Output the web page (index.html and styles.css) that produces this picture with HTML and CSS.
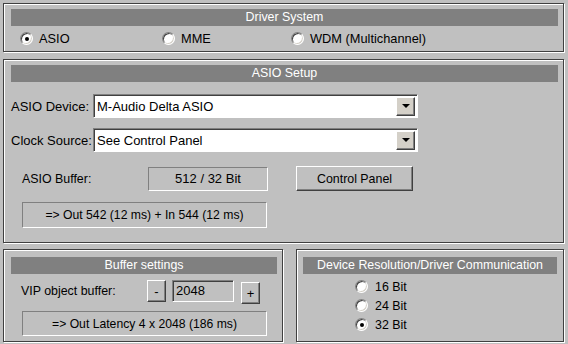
FILE: index.html
```html
<!DOCTYPE html>
<html lang="en">
<head>
  <meta charset="UTF-8">
  <title>Driver Setup</title>
  <link rel="stylesheet" href="styles.css">
</head>
<body>
  <div class="page">
    <section class="panel panel-driver">
      <div class="panel-title">Driver System</div>
      <div class="driver-row">
        <label class="radio"><span class="dot checked"></span>ASIO</label>
        <label class="radio"><span class="dot"></span>MME</label>
        <label class="radio"><span class="dot"></span>WDM (Multichannel)</label>
      </div>
    </section>

    <section class="panel panel-asio">
      <div class="panel-title">ASIO Setup</div>
      <div class="field-row first">
        <span class="field-label">ASIO Device:</span>
        <div class="combo"><span class="combo-text">M-Audio Delta ASIO</span><span class="combo-btn"><i class="arrow"></i></span></div>
      </div>
      <div class="field-row">
        <span class="field-label">Clock Source:</span>
        <div class="combo"><span class="combo-text">See Control Panel</span><span class="combo-btn"><i class="arrow"></i></span></div>
      </div>
      <div class="buffer-row">
        <span class="buffer-label">ASIO Buffer:</span>
        <div class="display buffer-value">512 / 32 Bit</div>
        <button class="btn control-btn">Control Panel</button>
      </div>
      <div class="display wide">=&gt; Out 542 (12 ms) + In 544 (12 ms)</div>
    </section>

    <div class="bottom-row">
      <section class="panel panel-buffer">
        <div class="panel-title">Buffer settings</div>
        <div class="vip-row">
          <span class="vip-label">VIP object buffer:</span>
          <button class="btn small-btn">-</button>
          <div class="spin-field">2048</div>
          <button class="btn small-btn plus">+</button>
        </div>
        <div class="display wide latency">=&gt; Out Latency 4 x 2048 (186 ms)</div>
      </section>

      <section class="panel panel-res">
        <div class="panel-title">Device Resolution/Driver Communication</div>
        <div class="res-list">
          <label class="radio"><span class="dot"></span>16 Bit</label>
          <label class="radio"><span class="dot"></span>24 Bit</label>
          <label class="radio"><span class="dot checked"></span>32 Bit</label>
        </div>
      </section>
    </div>
  </div>
</body>
</html>
```

FILE: styles.css
```css
* {
  box-sizing: border-box;
  font-family: 'Liberation Sans', Arial, sans-serif;
}
body {
  margin: 0;
  background: #c0c0c0;
  color: #000;
  font-size: 12px;
}
.page {
  width: 568px;
  height: 344px;
  padding: 3px 4px 0 3px;
  display: flex;
  flex-direction: column;
}
.panel {
  border: 1px solid #404040;
  box-shadow: 1px 1px 0 #fff, inset 1px 1px 0 #fff;
  padding: 5px 5px 0 7px;
}
.panel-title {
  background: #808080;
  color: #fff;
  text-align: center;
  height: 17px;
  line-height: 17px;
  font-size: 12.4px;
}

/* driver system */
.panel-driver {
  height: 49px;
}
.driver-row {
  display: grid;
  grid-template-columns: 142px 129px auto;
  padding: 4px 0 0 9px;
  height: 21px;
  align-items: center;
  font-size: 12.8px;
}
.radio {
  display: flex;
  align-items: center;
  gap: 6px;
  white-space: nowrap;
}
.dot {
  width: 13px;
  height: 13px;
  border-radius: 50%;
  border: 1px solid;
  border-color: #808080 #fff #fff #808080;
  background: #fff;
  box-shadow: inset 1px 1px 0 #404040, inset -1px -1px 0 #d4d0c8;
  display: flex;
  align-items: center;
  justify-content: center;
}
.dot.checked::after {
  content: "";
  width: 4px;
  height: 4px;
  border-radius: 50%;
  background: #000;
}

/* asio setup */
.panel-asio {
  margin-top: 7px;
  height: 184px;
}
.field-row {
  display: flex;
  align-items: center;
  margin-top: 10px;
}
.field-row.first {
  margin-top: 12px;
}
.field-label {
  width: 82px;
  font-size: 13px;
}
.combo {
  width: 325px;
  height: 24px;
  background: #fff;
  border: 1px solid;
  border-color: #808080 #fff #fff #808080;
  box-shadow: inset 1px 1px 0 #404040;
  display: flex;
  align-items: center;
  padding: 2px 2px 2px 3px;
}
.combo-text {
  flex: 1;
  font-size: 13px;
}
.combo-btn {
  width: 19px;
  height: 19px;
  background: #d4d0c8;
  border: 1px solid;
  border-color: #fff #404040 #404040 #fff;
  box-shadow: inset -1px -1px 0 #808080;
  display: flex;
  align-items: center;
  justify-content: center;
}
.arrow {
  width: 0;
  height: 0;
  border-left: 4px solid transparent;
  border-right: 4px solid transparent;
  border-top: 4px solid #000;
}
.buffer-row {
  display: flex;
  align-items: center;
  margin-top: 14px;
  padding-left: 11px;
  height: 25px;
}
.buffer-label {
  width: 126px;
  font-size: 12.4px;
}
.display {
  border: 1px solid;
  border-color: #808080 #fff #fff #808080;
  text-align: center;
  font-size: 12px;
}
.buffer-value {
  width: 120px;
  height: 24px;
  line-height: 22px;
  font-size: 13px;
}
.btn {
  background: #c0c0c0;
  border: 1px solid;
  border-color: #fff #404040 #404040 #fff;
  box-shadow: inset -1px -1px 0 #808080;
  font-size: 12.4px;
  padding: 0;
  color: #000;
}
.control-btn {
  margin-left: 28px;
  width: 117px;
  height: 25px;
}
.wide {
  margin: 11px 0 0 11px;
  width: 245px;
  height: 26px;
  line-height: 24px;
  font-size: 12.2px;
}

/* bottom panels */
.bottom-row {
  display: flex;
  gap: 13px;
  margin-top: 6px;
  height: 93px;
}
.panel-buffer {
  width: 280px;
  padding-top: 7px;
}
.vip-row {
  display: flex;
  align-items: center;
  height: 31px;
  padding: 3px 0 0 10px;
}
.vip-label {
  width: 126px;
  font-size: 12.4px;
}
.small-btn {
  width: 19px;
  height: 22px;
  font-size: 13px;
}
.small-btn.plus {
  margin: 4px 0 0 7px;
}
.spin-field {
  margin-left: 6px;
  width: 62px;
  height: 22px;
  border: 1px solid;
  border-color: #808080 #fff #fff #808080;
  box-shadow: inset 1px 1px 0 #404040;
  padding: 2px 0 0 3px;
  font-size: 13px;
}
.wide.latency {
  margin-top: 6px;
  height: 25px;
  font-size: 12.2px;
}
.panel-res {
  flex: 1;
  padding: 7px 6px 0 6px;
}
.res-list {
  display: flex;
  flex-direction: column;
  padding: 3px 0 0 52px;
  font-size: 12.4px;
}
.res-list .radio {
  height: 19px;
  gap: 7px;
}
```
